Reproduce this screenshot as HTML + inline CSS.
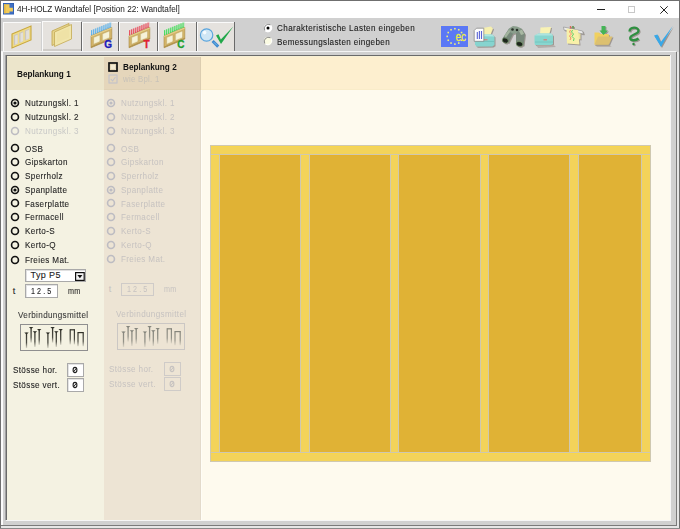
<!DOCTYPE html>
<html><head><meta charset="utf-8"><style>
html,body{margin:0;padding:0;width:680px;height:529px;overflow:hidden;background:#d0d0d0}
body>div,body>svg{position:absolute}
</style></head><body>
<div style="left:0;top:0;width:680px;height:529px;background:#d0d0d0"></div>
<div style="left:0px;top:0px;width:680px;height:18px;background:#ffffff;"></div>
<div style="left:0px;top:0px;width:680px;height:1px;background:#6f6f6f;"></div>
<div style="left:0px;top:0px;width:1px;height:529px;background:#6f6f6f;"></div>
<div style="left:679px;top:0px;width:1px;height:529px;background:#6f6f6f;"></div>
<svg style="left:3px;top:3px" width="11" height="12" viewBox="0 0 11 12"><rect x="0" y="0" width="11" height="11.5" fill="#2e5fb4"/><rect x="0.8" y="0.8" width="9.4" height="9.9" fill="#4070c4"/><path d="M0.9 1.2 H6.5 V4.8 H9.9 V8.6 H6.5 V10.3 H0.9 Z" fill="#f2cc58"/><path d="M0.9 1.2 H2.6 V10.3 H0.9 Z" fill="#e2b848"/></svg>
<div style="left:17px;top:3.96px;font-family:'Liberation Sans', sans-serif;font-size:9.5px;line-height:9.5px;color:#1a1a1a;white-space:nowrap;transform:scaleX(0.865);transform-origin:0 0;">4H-HOLZ Wandtafel [Position 22: Wandtafel]</div>
<div style="left:597px;top:9px;width:8px;height:1px;background:#222;"></div>
<div style="left:628px;top:6px;width:7px;height:7px;border:1px solid #c8c8c8;box-sizing:border-box;"></div>
<svg style="left:659.5px;top:5.5px" width="8" height="8"><path d="M0.3 0.3 L7.7 7.7 M7.7 0.3 L0.3 7.7" stroke="#222" stroke-width="1"/></svg>
<div style="left:3px;top:22px;width:38px;height:29px;background:#e5e2de;border-top:1px solid #fafafa;border-left:1px solid #fafafa;box-sizing:border-box"></div>
<div style="left:42px;top:21px;width:39px;height:30px;background:#e5e2de;border-top:1px solid #fafafa;border-left:1px solid #fafafa;box-sizing:border-box"></div>
<div style="left:81px;top:22px;width:1px;height:29px;background:#6a6a6a;"></div>
<div style="left:82px;top:22px;width:36px;height:29px;background:#e5e2de;border-top:1px solid #fafafa;border-left:1px solid #fafafa;box-sizing:border-box"></div>
<div style="left:118px;top:22px;width:1px;height:29px;background:#6a6a6a;"></div>
<div style="left:119px;top:22px;width:38px;height:29px;background:#e5e2de;border-top:1px solid #fafafa;border-left:1px solid #fafafa;box-sizing:border-box"></div>
<div style="left:157px;top:22px;width:1px;height:29px;background:#6a6a6a;"></div>
<div style="left:158px;top:22px;width:38px;height:29px;background:#e5e2de;border-top:1px solid #fafafa;border-left:1px solid #fafafa;box-sizing:border-box"></div>
<div style="left:196px;top:22px;width:1px;height:29px;background:#6a6a6a;"></div>
<div style="left:197px;top:22px;width:37px;height:29px;background:#e5e2de;border-top:1px solid #fafafa;border-left:1px solid #fafafa;box-sizing:border-box"></div>
<div style="left:234px;top:22px;width:1px;height:29px;background:#6a6a6a;"></div>
<div style="left:43px;top:49px;width:38px;height:2px;background:#cfccc8;"></div>
<div style="left:1px;top:51px;width:675px;height:1px;background:#f4f4f4;"></div>
<svg style="left:10px;top:24px" width="24" height="26" viewBox="0 0 24 26">
<path d="M2.00 10.00 L21.00 2.00 L21.00 16.00 L2.00 24.00 Z" fill="#f0dc88" stroke="#c9a83e" stroke-width="1.1"/>
<path d="M3.80 11.24 L7.60 9.64 L7.60 19.64 L3.80 21.24 Z" fill="#cbc6bf"/>
<path d="M5.10 11.74 L7.60 10.69 L7.60 19.39 L5.10 20.44 Z" fill="#e2dfda"/>
<path d="M9.20 8.97 L13.20 7.28 L13.20 17.28 L9.20 18.97 Z" fill="#cbc6bf"/>
<path d="M10.50 9.47 L13.20 8.33 L13.20 17.03 L10.50 18.17 Z" fill="#e2dfda"/>
<path d="M14.80 6.61 L19.20 4.76 L19.20 14.76 L14.80 16.61 Z" fill="#cbc6bf"/>
<path d="M16.10 7.11 L19.20 5.81 L19.20 14.51 L16.10 15.81 Z" fill="#e2dfda"/>
</svg>
<svg style="left:49px;top:22px" width="26" height="26" viewBox="0 0 26 26">
<path d="M3 9 L20 1.5 L20 16 L3 23.5 Z" fill="#e6d48a" stroke="#c4aa58" stroke-width="0.9"/>
<path d="M5.5 10 L22.5 2.5 L22.5 17 L5.5 24.5 Z" fill="#f1e6ac" stroke="#c8b060" stroke-width="0.9"/>
<path d="M8 11 L20 6 L20 15.5 L8 20.5 Z" fill="#efe2a6"/>
</svg>
<svg style="left:88px;top:20px" width="28" height="31" viewBox="0 0 28 31">
<path d="M3 10.2 L23.8 1.7 L23.8 7.6 L3 16.1 Z" fill="#5ab0ea" opacity="0.18"/>
<path d="M3.60 10.15 V15.35" stroke="#5ab0ea" stroke-width="1"/><path d="M5.65 9.32 V14.52" stroke="#5ab0ea" stroke-width="1"/><path d="M7.70 8.48 V13.68" stroke="#5ab0ea" stroke-width="1"/><path d="M9.75 7.64 V12.84" stroke="#5ab0ea" stroke-width="1"/><path d="M11.80 6.80 V12.00" stroke="#5ab0ea" stroke-width="1"/><path d="M13.85 5.97 V11.17" stroke="#5ab0ea" stroke-width="1"/><path d="M15.90 5.13 V10.33" stroke="#5ab0ea" stroke-width="1"/><path d="M17.95 4.29 V9.49" stroke="#5ab0ea" stroke-width="1"/><path d="M20.00 3.45 V8.65" stroke="#5ab0ea" stroke-width="1"/><path d="M22.05 2.62 V7.82" stroke="#5ab0ea" stroke-width="1"/><circle cx="3.60" cy="14.75" r="0.7" fill="#5ab0ea"/><circle cx="5.65" cy="13.92" r="0.7" fill="#5ab0ea"/><circle cx="7.70" cy="13.08" r="0.7" fill="#5ab0ea"/><circle cx="9.75" cy="12.24" r="0.7" fill="#5ab0ea"/><circle cx="11.80" cy="11.40" r="0.7" fill="#5ab0ea"/><circle cx="13.85" cy="10.57" r="0.7" fill="#5ab0ea"/><circle cx="15.90" cy="9.73" r="0.7" fill="#5ab0ea"/><circle cx="17.95" cy="8.89" r="0.7" fill="#5ab0ea"/><circle cx="20.00" cy="8.05" r="0.7" fill="#5ab0ea"/><circle cx="22.05" cy="7.22" r="0.7" fill="#5ab0ea"/>
<path d="M3 15.9 L23.8 7.4 L23.8 19 L3 27.8 Z" fill="#d4b66a" stroke="#a88a44" stroke-width="0.6"/>
<path d="M3 15.9 L23.8 7.4 L23.8 8.6 L3 17.1 Z" fill="#e8d490"/>
<path d="M3 26.4 L23.8 17.8 L23.8 19 L3 27.8 Z" fill="#b0924c"/>
<path d="M5.4 17.32 L11.9 14.66 L11.9 21.86 L5.4 24.52 Z" fill="#ece6c0" stroke="#b89a58" stroke-width="0.5"/><path d="M6.4 17.91 L11.4 15.87 L11.4 21.07 L6.4 23.11 Z" fill="#f6f2d8"/><path d="M14.2 13.72 L21.6 10.70 L21.6 17.90 L14.2 20.92 Z" fill="#ece6c0" stroke="#b89a58" stroke-width="0.5"/><path d="M15.2 14.31 L21.1 11.90 L21.1 17.10 L15.2 19.51 Z" fill="#f6f2d8"/>
<text x="16.2" y="28" font-family="Liberation Sans" font-weight="bold" font-size="10" fill="#1a1ab8" stroke="#1a1ab8" stroke-width="0.3">G</text>
</svg>
<svg style="left:126px;top:20px" width="28" height="31" viewBox="0 0 28 31">
<path d="M3 10.2 L23.8 1.7 L23.8 7.6 L3 16.1 Z" fill="#e84858" opacity="0.18"/>
<path d="M3.60 10.15 V15.35" stroke="#e84858" stroke-width="1"/><path d="M5.65 9.32 V14.52" stroke="#e84858" stroke-width="1"/><path d="M7.70 8.48 V13.68" stroke="#e84858" stroke-width="1"/><path d="M9.75 7.64 V12.84" stroke="#e84858" stroke-width="1"/><path d="M11.80 6.80 V12.00" stroke="#e84858" stroke-width="1"/><path d="M13.85 5.97 V11.17" stroke="#e84858" stroke-width="1"/><path d="M15.90 5.13 V10.33" stroke="#e84858" stroke-width="1"/><path d="M17.95 4.29 V9.49" stroke="#e84858" stroke-width="1"/><path d="M20.00 3.45 V8.65" stroke="#e84858" stroke-width="1"/><path d="M22.05 2.62 V7.82" stroke="#e84858" stroke-width="1"/><circle cx="3.60" cy="14.75" r="0.7" fill="#e84858"/><circle cx="5.65" cy="13.92" r="0.7" fill="#e84858"/><circle cx="7.70" cy="13.08" r="0.7" fill="#e84858"/><circle cx="9.75" cy="12.24" r="0.7" fill="#e84858"/><circle cx="11.80" cy="11.40" r="0.7" fill="#e84858"/><circle cx="13.85" cy="10.57" r="0.7" fill="#e84858"/><circle cx="15.90" cy="9.73" r="0.7" fill="#e84858"/><circle cx="17.95" cy="8.89" r="0.7" fill="#e84858"/><circle cx="20.00" cy="8.05" r="0.7" fill="#e84858"/><circle cx="22.05" cy="7.22" r="0.7" fill="#e84858"/>
<path d="M3 15.9 L23.8 7.4 L23.8 19 L3 27.8 Z" fill="#d4b66a" stroke="#a88a44" stroke-width="0.6"/>
<path d="M3 15.9 L23.8 7.4 L23.8 8.6 L3 17.1 Z" fill="#e8d490"/>
<path d="M3 26.4 L23.8 17.8 L23.8 19 L3 27.8 Z" fill="#b0924c"/>
<path d="M5.4 17.32 L11.9 14.66 L11.9 21.86 L5.4 24.52 Z" fill="#ece6c0" stroke="#b89a58" stroke-width="0.5"/><path d="M6.4 17.91 L11.4 15.87 L11.4 21.07 L6.4 23.11 Z" fill="#f6f2d8"/><path d="M14.2 13.72 L21.6 10.70 L21.6 17.90 L14.2 20.92 Z" fill="#ece6c0" stroke="#b89a58" stroke-width="0.5"/><path d="M15.2 14.31 L21.1 11.90 L21.1 17.10 L15.2 19.51 Z" fill="#f6f2d8"/>
<text x="17.4" y="28" font-family="Liberation Sans" font-weight="bold" font-size="10" fill="#e02030" stroke="#e02030" stroke-width="0.3">T</text>
</svg>
<svg style="left:161px;top:20px" width="28" height="31" viewBox="0 0 28 31">
<path d="M3 10.2 L23.8 1.7 L23.8 7.6 L3 16.1 Z" fill="#40dc58" opacity="0.18"/>
<path d="M3.60 10.15 V15.35" stroke="#40dc58" stroke-width="1"/><path d="M5.65 9.32 V14.52" stroke="#40dc58" stroke-width="1"/><path d="M7.70 8.48 V13.68" stroke="#40dc58" stroke-width="1"/><path d="M9.75 7.64 V12.84" stroke="#40dc58" stroke-width="1"/><path d="M11.80 6.80 V12.00" stroke="#40dc58" stroke-width="1"/><path d="M13.85 5.97 V11.17" stroke="#40dc58" stroke-width="1"/><path d="M15.90 5.13 V10.33" stroke="#40dc58" stroke-width="1"/><path d="M17.95 4.29 V9.49" stroke="#40dc58" stroke-width="1"/><path d="M20.00 3.45 V8.65" stroke="#40dc58" stroke-width="1"/><path d="M22.05 2.62 V7.82" stroke="#40dc58" stroke-width="1"/><circle cx="3.60" cy="14.75" r="0.7" fill="#40dc58"/><circle cx="5.65" cy="13.92" r="0.7" fill="#40dc58"/><circle cx="7.70" cy="13.08" r="0.7" fill="#40dc58"/><circle cx="9.75" cy="12.24" r="0.7" fill="#40dc58"/><circle cx="11.80" cy="11.40" r="0.7" fill="#40dc58"/><circle cx="13.85" cy="10.57" r="0.7" fill="#40dc58"/><circle cx="15.90" cy="9.73" r="0.7" fill="#40dc58"/><circle cx="17.95" cy="8.89" r="0.7" fill="#40dc58"/><circle cx="20.00" cy="8.05" r="0.7" fill="#40dc58"/><circle cx="22.05" cy="7.22" r="0.7" fill="#40dc58"/>
<path d="M3 15.9 L23.8 7.4 L23.8 19 L3 27.8 Z" fill="#d4b66a" stroke="#a88a44" stroke-width="0.6"/>
<path d="M3 15.9 L23.8 7.4 L23.8 8.6 L3 17.1 Z" fill="#e8d490"/>
<path d="M3 26.4 L23.8 17.8 L23.8 19 L3 27.8 Z" fill="#b0924c"/>
<path d="M5.4 17.32 L11.9 14.66 L11.9 21.86 L5.4 24.52 Z" fill="#ece6c0" stroke="#b89a58" stroke-width="0.5"/><path d="M6.4 17.91 L11.4 15.87 L11.4 21.07 L6.4 23.11 Z" fill="#f6f2d8"/><path d="M14.2 13.72 L21.6 10.70 L21.6 17.90 L14.2 20.92 Z" fill="#ece6c0" stroke="#b89a58" stroke-width="0.5"/><path d="M15.2 14.31 L21.1 11.90 L21.1 17.10 L15.2 19.51 Z" fill="#f6f2d8"/>
<text x="16.3" y="28" font-family="Liberation Sans" font-weight="bold" font-size="10" fill="#20a030" stroke="#20a030" stroke-width="0.3">C</text>
</svg>
<svg style="left:199px;top:24px" width="36" height="26" viewBox="0 0 36 26">
<path d="M13.6 17 L19.2 22.6" stroke="#3d8ad0" stroke-width="3"/>
<path d="M14.8 18.2 L18 21.4" stroke="#8cc4ee" stroke-width="0.8"/>
<circle cx="7.6" cy="11" r="6.2" fill="#cfe6f5" stroke="#5aa4dc" stroke-width="1.2"/>
<circle cx="5.6" cy="8.6" r="1.8" fill="#f6fcff"/>
<path d="M17 11.5 L19.5 10.3 L21.8 15.5 L34.3 2.5 L22 20 Z" fill="#22a84a"/>
</svg>
<svg style="left:262.5px;top:22.6px" width="10" height="10"><circle cx="5" cy="5" r="4.2" fill="#ffffff"/><path d="M1.8 7.5 A4.2 4.2 0 0 1 7.5 1.8" fill="none" stroke="#8a8a8a" stroke-width="1"/><path d="M8.2 2.5 A4.2 4.2 0 0 1 2.5 8.2" fill="none" stroke="#ffffff" stroke-width="1"/><circle cx="5" cy="5" r="1.5" fill="#000"/></svg>
<svg style="left:262.5px;top:36.3px" width="10" height="10"><circle cx="5" cy="5" r="4.2" fill="#fbfbe2"/><path d="M1.8 7.5 A4.2 4.2 0 0 1 7.5 1.8" fill="none" stroke="#8a8a8a" stroke-width="1"/><path d="M8.2 2.5 A4.2 4.2 0 0 1 2.5 8.2" fill="none" stroke="#ffffff" stroke-width="1"/></svg>
<div style="left:277px;top:23.68px;font-family:'Liberation Sans', sans-serif;font-size:9px;line-height:9px;color:#1a1a1a;white-space:nowrap;transform:scaleX(0.9);transform-origin:0 0;letter-spacing:0.45px;-webkit-text-stroke:0.1px #1a1a1a;">Charakteristische Lasten eingeben</div>
<div style="left:277px;top:38.18px;font-family:'Liberation Sans', sans-serif;font-size:9px;line-height:9px;color:#1a1a1a;white-space:nowrap;transform:scaleX(0.9);transform-origin:0 0;letter-spacing:0.4px;-webkit-text-stroke:0.1px #1a1a1a;">Bemessungslasten eingeben</div>
<svg style="left:440px;top:25px" width="29" height="23" viewBox="0 0 29 23">
<rect x="0.5" y="0.5" width="28" height="22" fill="#5b78f5" stroke="#d6d2c6" stroke-width="1"/>
<rect x="14.10" y="2.90" width="1.6" height="1.6" fill="#f0f07a"/><rect x="17.95" y="3.93" width="1.6" height="1.6" fill="#f0f07a"/><rect x="20.77" y="6.75" width="1.6" height="1.6" fill="#f0f07a"/><rect x="20.77" y="14.45" width="1.6" height="1.6" fill="#f0f07a"/><rect x="17.95" y="17.27" width="1.6" height="1.6" fill="#f0f07a"/><rect x="14.10" y="18.30" width="1.6" height="1.6" fill="#f0f07a"/><rect x="10.25" y="17.27" width="1.6" height="1.6" fill="#f0f07a"/><rect x="7.43" y="14.45" width="1.6" height="1.6" fill="#f0f07a"/><rect x="6.40" y="10.60" width="1.6" height="1.6" fill="#f0f07a"/><rect x="7.43" y="6.75" width="1.6" height="1.6" fill="#f0f07a"/><rect x="10.25" y="3.93" width="1.6" height="1.6" fill="#f0f07a"/>
<text x="15.6" y="16.3" font-family="Liberation Sans" font-size="12.5" fill="#eeee40" stroke="#eeee40" stroke-width="0.3" textLength="10.5" lengthAdjust="spacingAndGlyphs">ec</text>
</svg>
<svg style="left:470px;top:24px;filter:drop-shadow(1px 1px 0.6px rgba(60,40,30,0.35))" width="28" height="26" viewBox="0 0 28 26">
<path d="M6 21 L23 20.5 L25 22 L7 23 Z" fill="#b8b0a8" opacity="0.6"/>
<path d="M12.5 4 L21 2.6 L23 4.5 L20.5 11 L13 11 Z" fill="#f6f0b0"/>
<path d="M5 12 L8 10.5 L22 10.5 L24.5 12.5 L24.5 20.5 L22.5 22.5 L6.5 22.5 L5 20.5 Z" fill="#86d4cf"/>
<path d="M5 12 L8 10.5 L22 10.5 L24.5 12.5 Z" fill="#b0e6e2"/>
<path d="M5.5 17.5 L24 17.5" stroke="#70c0bb" stroke-width="0.8"/>
<rect x="14" y="15" width="3.5" height="1.4" fill="#c89088"/>
<path d="M6.5 4.2 L13.8 4.2 L13.8 17.3 L4.2 17.3 L4.2 6.5 Z" fill="#fdfdfd" stroke="#808080" stroke-width="0.7"/>
<path d="M7.3 8 V15 M9.4 7 V15 M11.5 7 V15" stroke="#5a64d4" stroke-width="1.1"/>
</svg>
<svg style="left:500px;top:24px;filter:drop-shadow(1px 1px 0.6px rgba(60,40,30,0.35))" width="28" height="26" viewBox="0 0 28 26">
<path d="M2.5 14.5 L9 4.5 L14.5 7 L8.5 19 Z" fill="#76887a"/>
<path d="M4 12 L9.5 5 L11.5 6 L6 13.5 Z" fill="#a2b49e"/>
<path d="M16 8 L21.5 4.5 L25 10 L23.5 21.5 L16 20.5 Z" fill="#7a8a7c"/>
<path d="M19 7 L22 5.5 L24 10 L21 11 Z" fill="#a8b8a2"/>
<path d="M9 4.5 L13 2 L17 2.5 L21.5 4.5 L16.5 9 L13.5 10 L10 8 Z" fill="#8a9e8c"/>
<circle cx="12.5" cy="5.5" r="1.3" fill="#2a322a"/><circle cx="17" cy="6" r="1.3" fill="#2a322a"/>
<ellipse cx="5.3" cy="16.5" rx="3.2" ry="2.4" transform="rotate(25 5.3 16.5)" fill="#1c241c" stroke="#7ea070" stroke-width="0.6"/>
<ellipse cx="19.5" cy="20" rx="3.3" ry="2.4" transform="rotate(15 19.5 20)" fill="#1c241c" stroke="#7ea070" stroke-width="0.6"/>
</svg>
<svg style="left:530px;top:24px;filter:drop-shadow(1px 1px 0.6px rgba(60,40,30,0.35))" width="28" height="26" viewBox="0 0 28 26">
<path d="M6 21 L23 20.5 L25 22 L7 23 Z" fill="#b8b0a8" opacity="0.6"/>
<path d="M10.5 3.5 L21 3 L20.5 6 L19 11 L10 11 Z" fill="#f8f2b4"/>
<path d="M4.5 11.5 L8.5 9.5 L21 9.5 L23 11.5 L23 20 L21 21 L5 21 L4.5 19 Z" fill="#88d6cf"/>
<path d="M4.5 11.5 L8.5 9.5 L21 9.5 L23 11.5 Z" fill="#ade4df"/>
<path d="M5 18 L23 18" stroke="#72c2bb" stroke-width="0.8"/>
<rect x="13.5" y="15" width="3.5" height="1.5" fill="#c89088"/>
</svg>
<svg style="left:560px;top:23px;filter:drop-shadow(1px 1px 0.6px rgba(60,40,30,0.35))" width="28" height="26" viewBox="0 0 28 26">
<path d="M3.5 4 L22.5 8 L23.5 11 L4 7 Z" fill="#ececec" stroke="#8a8a8a" stroke-width="0.6"/>
<path d="M18 10 L20.5 10.5 L20.5 16.5 L18 16 Z" fill="#ece49a"/>
<path d="M6.5 5.5 L18 7 L19.5 21.5 L7 20.5 Z" fill="#f8f0a8"/>
<path d="M10.5 3 V5.5 M13 3 V5.5" stroke="#d86a5a" stroke-width="1.4"/>
<path d="M13 3 V5.5" stroke="#4aa860" stroke-width="1.4"/>
<path d="M10.5 7 L9.5 9 L11.5 11 L9.5 13 L11 15 L10 17" fill="none" stroke="#f08060" stroke-width="0.9"/>
<path d="M12.5 7 L11.5 9 L13.5 11 L12 13.5 L14 15.5 L13.5 18" fill="none" stroke="#50c860" stroke-width="0.9"/>
</svg>
<svg style="left:590px;top:23px;filter:drop-shadow(1px 1px 0.6px rgba(60,40,30,0.35))" width="28" height="26" viewBox="0 0 28 26">
<path d="M4.5 9.5 L9 9.5 L10.5 11 L18.5 11 L19 13 L18.5 21.5 L4.5 21.5 Z" fill="#f0d060"/>
<path d="M8 13.5 L22.5 13.5 L19 21.5 L4.5 21.5 Z" fill="#dcc070"/>
<path d="M5 22 L19 22 L21 23 L6 23 Z" fill="#a09888" opacity="0.5"/>
<path d="M11.5 3 L15.5 3 L15.5 7.5 L18 7.5 L13.5 12 L9.5 7.5 L11.5 7.5 Z" fill="#44b456"/>
</svg>
<svg style="left:622px;top:23px;filter:drop-shadow(1px 1px 0.6px rgba(60,40,30,0.35))" width="22" height="26" viewBox="0 0 22 26">
<path d="M7.5 8.5 C7.5 3.5 16.5 3.2 16.5 8 C16.5 11 8.2 11.5 8.2 15 C8.2 17.8 13.5 18 16.5 15.5" fill="none" stroke="#2e9040" stroke-width="2.3"/>
<circle cx="11.5" cy="21" r="1.2" fill="#2a8a3a"/>
</svg>
<svg style="left:650px;top:23px;filter:drop-shadow(1px 1px 0.6px rgba(60,40,30,0.35))" width="26" height="26" viewBox="0 0 26 26">
<path d="M4 12.5 L7.5 11.5 L10.8 19 L22.8 3 L11 24 Z" fill="#38a8e8"/>
</svg>
<div style="left:1px;top:52px;width:2px;height:477px;background:#fbfbfb;"></div>
<div style="left:3px;top:52px;width:676px;height:477px;background:#d0d0d0;"></div>
<div style="left:1px;top:52px;width:2px;height:477px;background:#fbfbfb;"></div>
<div style="left:5px;top:55px;width:1px;height:465px;background:#a0a0a0;"></div>
<div style="left:6px;top:55px;width:1px;height:465px;background:#6a6a6a;"></div>
<div style="left:6px;top:55px;width:665px;height:1px;background:#6a6a6a;"></div>
<div style="left:6px;top:520px;width:665px;height:1px;background:#f6f6f6;"></div>
<div style="left:670px;top:55px;width:1px;height:466px;background:#f6f6f6;"></div>
<div style="left:676px;top:52px;width:1px;height:474px;background:#7a7a7a;"></div>
<div style="left:1px;top:525px;width:676px;height:1px;background:#7a7a7a;"></div>
<div style="left:677px;top:52px;width:2px;height:476px;background:#e6e6e6;"></div>
<div style="left:1px;top:526px;width:678px;height:2px;background:#e6e6e6;"></div>
<div style="left:0px;top:528px;width:680px;height:1px;background:#8a8a8a;"></div>
<div style="left:7px;top:56px;width:663px;height:464px;background:#fefaee;"></div>
<div style="left:7px;top:56px;width:97px;height:34px;background:#ece5cb;"></div>
<div style="left:104px;top:56px;width:97px;height:34px;background:#e5d6bb;"></div>
<div style="left:201px;top:56px;width:469px;height:34px;background:#fdefcf;"></div>
<div style="left:7px;top:90px;width:97px;height:430px;background:#f4f2e2;"></div>
<div style="left:104px;top:90px;width:97px;height:430px;background:#ede4d4;"></div>
<div style="left:200px;top:56px;width:1px;height:34px;background:#dccdb0;"></div>
<div style="left:200px;top:90px;width:1px;height:430px;background:#e3dacb;"></div>
<div style="left:201px;top:90px;width:1px;height:430px;background:#fffdf6;"></div>
<div style="left:104px;top:89px;width:96px;height:1px;background:#e0d2b5;"></div>
<div style="left:201px;top:89px;width:469px;height:1px;background:#f9ecc9;"></div>
<div style="left:7px;top:56px;width:663px;height:1px;background:#f8f0d4;"></div>
<div style="left:17px;top:69.78px;font-family:'Liberation Sans', sans-serif;font-size:9px;line-height:9px;color:#111;white-space:nowrap;font-weight:bold;transform:scaleX(0.91);transform-origin:0 0;">Beplankung 1</div>
<svg style="left:108px;top:62px" width="10" height="10"><rect x="1" y="1" width="8" height="8" fill="#f4ead2" stroke="#111" stroke-width="1.7"/><rect x="2.6" y="2.6" width="4.8" height="4.8" fill="none" stroke="#d9cba8" stroke-width="0.6"/></svg>
<div style="left:123px;top:62.98px;font-family:'Liberation Sans', sans-serif;font-size:9px;line-height:9px;color:#111;white-space:nowrap;font-weight:bold;transform:scaleX(0.91);transform-origin:0 0;">Beplankung 2</div>
<svg style="left:108px;top:74.3px" width="10" height="10"><rect x="1" y="1" width="8" height="8" fill="none" stroke="#c2c2ca" stroke-width="1.1"/><path d="M2.8 5 L4.6 7 L7.5 3" fill="none" stroke="#c2c2ca" stroke-width="1.1"/></svg>
<div style="left:123px;top:74.98px;font-family:'Liberation Sans', sans-serif;font-size:9px;line-height:9px;color:#c8c2b8;white-space:nowrap;transform:scaleX(0.87);transform-origin:0 0;letter-spacing:0.3px;">wie Bpl. 1</div>
<svg style="left:9.5px;top:98.1px" width="10" height="10"><circle cx="5" cy="5" r="3.45" fill="none" stroke="#111" stroke-width="1.6"/><circle cx="5" cy="5" r="1.6" fill="#111"/></svg>
<div style="left:24.6px;top:99.48px;font-family:'Liberation Sans', sans-serif;font-size:9px;line-height:9px;color:#262626;white-space:nowrap;transform:scaleX(0.9);transform-origin:0 0;letter-spacing:0.4px;-webkit-text-stroke:0.12px #262626;">Nutzungskl. 1</div>
<svg style="left:9.5px;top:111.89999999999999px" width="10" height="10"><circle cx="5" cy="5" r="3.45" fill="none" stroke="#111" stroke-width="1.6"/></svg>
<div style="left:24.6px;top:113.28px;font-family:'Liberation Sans', sans-serif;font-size:9px;line-height:9px;color:#262626;white-space:nowrap;transform:scaleX(0.9);transform-origin:0 0;letter-spacing:0.4px;-webkit-text-stroke:0.12px #262626;">Nutzungskl. 2</div>
<svg style="left:9.5px;top:125.5px" width="10" height="10"><circle cx="5" cy="5" r="3.45" fill="none" stroke="#bdbcc2" stroke-width="1.6"/></svg>
<div style="left:24.6px;top:126.88px;font-family:'Liberation Sans', sans-serif;font-size:9px;line-height:9px;color:#c8c8c6;white-space:nowrap;transform:scaleX(0.9);transform-origin:0 0;letter-spacing:0.4px;">Nutzungskl. 3</div>
<svg style="left:9.5px;top:143.2px" width="10" height="10"><circle cx="5" cy="5" r="3.45" fill="none" stroke="#111" stroke-width="1.6"/></svg>
<div style="left:24.6px;top:144.58px;font-family:'Liberation Sans', sans-serif;font-size:9px;line-height:9px;color:#262626;white-space:nowrap;transform:scaleX(0.9);transform-origin:0 0;letter-spacing:0.4px;-webkit-text-stroke:0.12px #262626;">OSB</div>
<svg style="left:9.5px;top:157.1px" width="10" height="10"><circle cx="5" cy="5" r="3.45" fill="none" stroke="#111" stroke-width="1.6"/></svg>
<div style="left:24.6px;top:158.48px;font-family:'Liberation Sans', sans-serif;font-size:9px;line-height:9px;color:#262626;white-space:nowrap;transform:scaleX(0.9);transform-origin:0 0;letter-spacing:0.4px;-webkit-text-stroke:0.12px #262626;">Gipskarton</div>
<svg style="left:9.5px;top:170.79999999999998px" width="10" height="10"><circle cx="5" cy="5" r="3.45" fill="none" stroke="#111" stroke-width="1.6"/></svg>
<div style="left:24.6px;top:172.18px;font-family:'Liberation Sans', sans-serif;font-size:9px;line-height:9px;color:#262626;white-space:nowrap;transform:scaleX(0.9);transform-origin:0 0;letter-spacing:0.4px;-webkit-text-stroke:0.12px #262626;">Sperrholz</div>
<svg style="left:9.5px;top:184.6px" width="10" height="10"><circle cx="5" cy="5" r="3.45" fill="none" stroke="#111" stroke-width="1.6"/><circle cx="5" cy="5" r="1.6" fill="#111"/></svg>
<div style="left:24.6px;top:185.98px;font-family:'Liberation Sans', sans-serif;font-size:9px;line-height:9px;color:#262626;white-space:nowrap;transform:scaleX(0.9);transform-origin:0 0;letter-spacing:0.4px;-webkit-text-stroke:0.12px #262626;">Spanplatte</div>
<svg style="left:9.5px;top:198.4px" width="10" height="10"><circle cx="5" cy="5" r="3.45" fill="none" stroke="#111" stroke-width="1.6"/></svg>
<div style="left:24.6px;top:199.78px;font-family:'Liberation Sans', sans-serif;font-size:9px;line-height:9px;color:#262626;white-space:nowrap;transform:scaleX(0.9);transform-origin:0 0;letter-spacing:0.4px;-webkit-text-stroke:0.12px #262626;">Faserplatte</div>
<svg style="left:9.5px;top:212.1px" width="10" height="10"><circle cx="5" cy="5" r="3.45" fill="none" stroke="#111" stroke-width="1.6"/></svg>
<div style="left:24.6px;top:213.48px;font-family:'Liberation Sans', sans-serif;font-size:9px;line-height:9px;color:#262626;white-space:nowrap;transform:scaleX(0.9);transform-origin:0 0;letter-spacing:0.4px;-webkit-text-stroke:0.12px #262626;">Fermacell</div>
<svg style="left:9.5px;top:226.0px" width="10" height="10"><circle cx="5" cy="5" r="3.45" fill="none" stroke="#111" stroke-width="1.6"/></svg>
<div style="left:24.6px;top:227.38px;font-family:'Liberation Sans', sans-serif;font-size:9px;line-height:9px;color:#262626;white-space:nowrap;transform:scaleX(0.9);transform-origin:0 0;letter-spacing:0.4px;-webkit-text-stroke:0.12px #262626;">Kerto-S</div>
<svg style="left:9.5px;top:239.7px" width="10" height="10"><circle cx="5" cy="5" r="3.45" fill="none" stroke="#111" stroke-width="1.6"/></svg>
<div style="left:24.6px;top:241.08px;font-family:'Liberation Sans', sans-serif;font-size:9px;line-height:9px;color:#262626;white-space:nowrap;transform:scaleX(0.9);transform-origin:0 0;letter-spacing:0.4px;-webkit-text-stroke:0.12px #262626;">Kerto-Q</div>
<svg style="left:9.5px;top:254.70000000000005px" width="10" height="10"><circle cx="5" cy="5" r="3.45" fill="none" stroke="#111" stroke-width="1.6"/></svg>
<div style="left:24.6px;top:256.08px;font-family:'Liberation Sans', sans-serif;font-size:9px;line-height:9px;color:#262626;white-space:nowrap;transform:scaleX(0.9);transform-origin:0 0;letter-spacing:0.4px;-webkit-text-stroke:0.12px #262626;">Freies Mat.</div>
<svg style="left:105.5px;top:98.1px" width="10" height="10"><circle cx="5" cy="5" r="3.45" fill="none" stroke="#bdbcc2" stroke-width="1.6"/><circle cx="5" cy="5" r="1.6" fill="#bdbcc2"/></svg>
<div style="left:120.6px;top:99.48px;font-family:'Liberation Sans', sans-serif;font-size:9px;line-height:9px;color:#c6c2c0;white-space:nowrap;transform:scaleX(0.9);transform-origin:0 0;letter-spacing:0.4px;">Nutzungskl. 1</div>
<svg style="left:105.5px;top:111.89999999999999px" width="10" height="10"><circle cx="5" cy="5" r="3.45" fill="none" stroke="#bdbcc2" stroke-width="1.6"/></svg>
<div style="left:120.6px;top:113.28px;font-family:'Liberation Sans', sans-serif;font-size:9px;line-height:9px;color:#c6c2c0;white-space:nowrap;transform:scaleX(0.9);transform-origin:0 0;letter-spacing:0.4px;">Nutzungskl. 2</div>
<svg style="left:105.5px;top:125.5px" width="10" height="10"><circle cx="5" cy="5" r="3.45" fill="none" stroke="#bdbcc2" stroke-width="1.6"/></svg>
<div style="left:120.6px;top:126.88px;font-family:'Liberation Sans', sans-serif;font-size:9px;line-height:9px;color:#c6c2c0;white-space:nowrap;transform:scaleX(0.9);transform-origin:0 0;letter-spacing:0.4px;">Nutzungskl. 3</div>
<svg style="left:105.5px;top:143.2px" width="10" height="10"><circle cx="5" cy="5" r="3.45" fill="none" stroke="#bdbcc2" stroke-width="1.6"/></svg>
<div style="left:120.6px;top:144.58px;font-family:'Liberation Sans', sans-serif;font-size:9px;line-height:9px;color:#c6c2c0;white-space:nowrap;transform:scaleX(0.9);transform-origin:0 0;letter-spacing:0.4px;">OSB</div>
<svg style="left:105.5px;top:157.1px" width="10" height="10"><circle cx="5" cy="5" r="3.45" fill="none" stroke="#bdbcc2" stroke-width="1.6"/></svg>
<div style="left:120.6px;top:158.48px;font-family:'Liberation Sans', sans-serif;font-size:9px;line-height:9px;color:#c6c2c0;white-space:nowrap;transform:scaleX(0.9);transform-origin:0 0;letter-spacing:0.4px;">Gipskarton</div>
<svg style="left:105.5px;top:170.79999999999998px" width="10" height="10"><circle cx="5" cy="5" r="3.45" fill="none" stroke="#bdbcc2" stroke-width="1.6"/></svg>
<div style="left:120.6px;top:172.18px;font-family:'Liberation Sans', sans-serif;font-size:9px;line-height:9px;color:#c6c2c0;white-space:nowrap;transform:scaleX(0.9);transform-origin:0 0;letter-spacing:0.4px;">Sperrholz</div>
<svg style="left:105.5px;top:184.6px" width="10" height="10"><circle cx="5" cy="5" r="3.45" fill="none" stroke="#bdbcc2" stroke-width="1.6"/><circle cx="5" cy="5" r="1.6" fill="#bdbcc2"/></svg>
<div style="left:120.6px;top:185.98px;font-family:'Liberation Sans', sans-serif;font-size:9px;line-height:9px;color:#c6c2c0;white-space:nowrap;transform:scaleX(0.9);transform-origin:0 0;letter-spacing:0.4px;">Spanplatte</div>
<svg style="left:105.5px;top:198.4px" width="10" height="10"><circle cx="5" cy="5" r="3.45" fill="none" stroke="#bdbcc2" stroke-width="1.6"/></svg>
<div style="left:120.6px;top:199.78px;font-family:'Liberation Sans', sans-serif;font-size:9px;line-height:9px;color:#c6c2c0;white-space:nowrap;transform:scaleX(0.9);transform-origin:0 0;letter-spacing:0.4px;">Faserplatte</div>
<svg style="left:105.5px;top:212.1px" width="10" height="10"><circle cx="5" cy="5" r="3.45" fill="none" stroke="#bdbcc2" stroke-width="1.6"/></svg>
<div style="left:120.6px;top:213.48px;font-family:'Liberation Sans', sans-serif;font-size:9px;line-height:9px;color:#c6c2c0;white-space:nowrap;transform:scaleX(0.9);transform-origin:0 0;letter-spacing:0.4px;">Fermacell</div>
<svg style="left:105.5px;top:226.0px" width="10" height="10"><circle cx="5" cy="5" r="3.45" fill="none" stroke="#bdbcc2" stroke-width="1.6"/></svg>
<div style="left:120.6px;top:227.38px;font-family:'Liberation Sans', sans-serif;font-size:9px;line-height:9px;color:#c6c2c0;white-space:nowrap;transform:scaleX(0.9);transform-origin:0 0;letter-spacing:0.4px;">Kerto-S</div>
<svg style="left:105.5px;top:239.7px" width="10" height="10"><circle cx="5" cy="5" r="3.45" fill="none" stroke="#bdbcc2" stroke-width="1.6"/></svg>
<div style="left:120.6px;top:241.08px;font-family:'Liberation Sans', sans-serif;font-size:9px;line-height:9px;color:#c6c2c0;white-space:nowrap;transform:scaleX(0.9);transform-origin:0 0;letter-spacing:0.4px;">Kerto-Q</div>
<svg style="left:105.5px;top:253.80000000000007px" width="10" height="10"><circle cx="5" cy="5" r="3.45" fill="none" stroke="#bdbcc2" stroke-width="1.6"/></svg>
<div style="left:120.6px;top:255.18px;font-family:'Liberation Sans', sans-serif;font-size:9px;line-height:9px;color:#c6c2c0;white-space:nowrap;transform:scaleX(0.9);transform-origin:0 0;letter-spacing:0.4px;">Freies Mat.</div>
<div style="left:25px;top:269px;width:61px;height:13px;background:#fff;border:1px solid #a9a9a9;box-sizing:border-box;box-shadow:inset 1px 1px 0 #e0e0e0"></div>
<div style="left:30.5px;top:270.98px;font-family:'Liberation Sans', sans-serif;font-size:9px;line-height:9px;color:#1a1a1a;white-space:nowrap;letter-spacing:0.4px;-webkit-text-stroke:0.1px #1a1a1a;">Typ P5</div>
<svg style="left:75px;top:271.5px" width="10" height="9"><rect x="0.6" y="0.6" width="8.6" height="7.8" fill="#f4f4f4" stroke="#111" stroke-width="1.2"/><path d="M2.4 3 L7.4 3 L4.9 6.2 Z" fill="#111"/></svg>
<div style="left:12.7px;top:286.88px;font-family:'Liberation Sans', sans-serif;font-size:9px;line-height:9px;color:#262626;white-space:nowrap;-webkit-text-stroke:0.1px #262626;">t</div>
<div style="left:25px;top:284px;width:33px;height:13.5px;background:#fff;border:1px solid #a9a9a9;box-sizing:border-box;box-shadow:inset 1px 1px 0 #e4e4e4;"></div>
<div style="left:30.6px;top:286.88px;font-family:'Liberation Sans', sans-serif;font-size:9px;line-height:9px;color:#262626;white-space:nowrap;transform:scaleX(0.8);transform-origin:0 0;letter-spacing:2.6px;-webkit-text-stroke:0.12px #262626;">12.5</div>
<div style="left:68px;top:286.68px;font-family:'Liberation Sans', sans-serif;font-size:9px;line-height:9px;color:#262626;white-space:nowrap;transform:scaleX(0.8);transform-origin:0 0;letter-spacing:0.4px;-webkit-text-stroke:0.1px #262626;">mm</div>
<div style="left:108.7px;top:285.38px;font-family:'Liberation Sans', sans-serif;font-size:9px;line-height:9px;color:#c6c2c0;white-space:nowrap;">t</div>
<div style="left:121px;top:282.5px;width:33px;height:13.5px;background:transparent;border:1px solid #cfcbc8;box-sizing:border-box;"></div>
<div style="left:126.6px;top:285.38px;font-family:'Liberation Sans', sans-serif;font-size:9px;line-height:9px;color:#c6c2c0;white-space:nowrap;transform:scaleX(0.8);transform-origin:0 0;letter-spacing:2.6px;">12.5</div>
<div style="left:164px;top:285.18px;font-family:'Liberation Sans', sans-serif;font-size:9px;line-height:9px;color:#c6c2c0;white-space:nowrap;transform:scaleX(0.8);transform-origin:0 0;letter-spacing:0.4px;">mm</div>
<div style="left:18.2px;top:311.38px;font-family:'Liberation Sans', sans-serif;font-size:9px;line-height:9px;color:#3a3a3a;white-space:nowrap;transform:scaleX(0.9);transform-origin:0 0;letter-spacing:0.4px;-webkit-text-stroke:0.1px #3a3a3a;">Verbindungsmittel</div>
<div style="left:20px;top:324px;width:68px;height:27px;border:1px solid #8f8f8f;box-sizing:border-box"></div>
<svg style="left:20px;top:324px" width="69" height="27"><defs><linearGradient id="ng0" x1="0" y1="0" x2="0" y2="1"><stop offset="0" stop-color="#303028"/><stop offset="0.65" stop-color="#303028" stop-opacity="0.85"/><stop offset="1" stop-color="#303028" stop-opacity="0.15"/></linearGradient></defs><path d="M4.30 8.40 L8.70 8.40 L7.10 9.90 L5.90 9.90 Z" fill="#303028"/><rect x="5.85" y="8.70" width="1.3" height="15.40" fill="url(#ng0)"/><path d="M8.90 3.10 L13.30 3.10 L11.70 4.60 L10.50 4.60 Z" fill="#303028"/><rect x="10.45" y="3.40" width="1.3" height="15.30" fill="url(#ng0)"/><path d="M12.70 7.30 L17.10 7.30 L15.50 8.80 L14.30 8.80 Z" fill="#303028"/><rect x="14.25" y="7.60" width="1.3" height="15.40" fill="url(#ng0)"/><path d="M17.00 5.10 L21.40 5.10 L19.80 6.60 L18.60 6.60 Z" fill="#303028"/><rect x="18.55" y="5.40" width="1.3" height="15.50" fill="url(#ng0)"/><path d="M25.70 8.40 L30.10 8.40 L28.50 9.90 L27.30 9.90 Z" fill="#303028"/><rect x="27.25" y="8.70" width="1.3" height="15.40" fill="url(#ng0)"/><path d="M30.40 3.10 L34.80 3.10 L33.20 4.60 L32.00 4.60 Z" fill="#303028"/><rect x="31.95" y="3.40" width="1.3" height="15.30" fill="url(#ng0)"/><path d="M34.10 7.30 L38.50 7.30 L36.90 8.80 L35.70 8.80 Z" fill="#303028"/><rect x="35.65" y="7.60" width="1.3" height="15.40" fill="url(#ng0)"/><path d="M38.50 5.10 L42.90 5.10 L41.30 6.60 L40.10 6.60 Z" fill="#303028"/><rect x="40.05" y="5.40" width="1.3" height="15.50" fill="url(#ng0)"/><path d="M50.20 5.80 H54.40" stroke="#303028" stroke-width="1.2"/><rect x="49.60" y="5.20" width="1.2" height="15.30" fill="url(#ng0)"/><rect x="53.80" y="5.20" width="1.2" height="15.30" fill="url(#ng0)"/><path d="M58.00 8.60 H63.20" stroke="#303028" stroke-width="1.2"/><rect x="57.40" y="8.00" width="1.2" height="14.30" fill="url(#ng0)"/><rect x="62.60" y="8.00" width="1.2" height="14.30" fill="url(#ng0)"/></svg>
<div style="left:115.5px;top:310.38px;font-family:'Liberation Sans', sans-serif;font-size:9px;line-height:9px;color:#c6c2c0;white-space:nowrap;transform:scaleX(0.9);transform-origin:0 0;letter-spacing:0.4px;">Verbindungsmittel</div>
<div style="left:117px;top:323px;width:68px;height:27px;border:1px solid #cbc7c4;box-sizing:border-box"></div>
<svg style="left:117px;top:323px" width="69" height="27"><defs><linearGradient id="ng1" x1="0" y1="0" x2="0" y2="1"><stop offset="0" stop-color="#85857c"/><stop offset="0.65" stop-color="#85857c" stop-opacity="0.85"/><stop offset="1" stop-color="#85857c" stop-opacity="0.15"/></linearGradient></defs><path d="M4.30 8.40 L8.70 8.40 L7.10 9.90 L5.90 9.90 Z" fill="#85857c"/><rect x="5.85" y="8.70" width="1.3" height="15.40" fill="url(#ng1)"/><path d="M8.90 3.10 L13.30 3.10 L11.70 4.60 L10.50 4.60 Z" fill="#85857c"/><rect x="10.45" y="3.40" width="1.3" height="15.30" fill="url(#ng1)"/><path d="M12.70 7.30 L17.10 7.30 L15.50 8.80 L14.30 8.80 Z" fill="#85857c"/><rect x="14.25" y="7.60" width="1.3" height="15.40" fill="url(#ng1)"/><path d="M17.00 5.10 L21.40 5.10 L19.80 6.60 L18.60 6.60 Z" fill="#85857c"/><rect x="18.55" y="5.40" width="1.3" height="15.50" fill="url(#ng1)"/><path d="M25.70 8.40 L30.10 8.40 L28.50 9.90 L27.30 9.90 Z" fill="#85857c"/><rect x="27.25" y="8.70" width="1.3" height="15.40" fill="url(#ng1)"/><path d="M30.40 3.10 L34.80 3.10 L33.20 4.60 L32.00 4.60 Z" fill="#85857c"/><rect x="31.95" y="3.40" width="1.3" height="15.30" fill="url(#ng1)"/><path d="M34.10 7.30 L38.50 7.30 L36.90 8.80 L35.70 8.80 Z" fill="#85857c"/><rect x="35.65" y="7.60" width="1.3" height="15.40" fill="url(#ng1)"/><path d="M38.50 5.10 L42.90 5.10 L41.30 6.60 L40.10 6.60 Z" fill="#85857c"/><rect x="40.05" y="5.40" width="1.3" height="15.50" fill="url(#ng1)"/><path d="M50.20 5.80 H54.40" stroke="#85857c" stroke-width="1.2"/><rect x="49.60" y="5.20" width="1.2" height="15.30" fill="url(#ng1)"/><rect x="53.80" y="5.20" width="1.2" height="15.30" fill="url(#ng1)"/><path d="M58.00 8.60 H63.20" stroke="#85857c" stroke-width="1.2"/><rect x="57.40" y="8.00" width="1.2" height="14.30" fill="url(#ng1)"/><rect x="62.60" y="8.00" width="1.2" height="14.30" fill="url(#ng1)"/></svg>
<div style="left:12.7px;top:366.38px;font-family:'Liberation Sans', sans-serif;font-size:9px;line-height:9px;color:#262626;white-space:nowrap;transform:scaleX(0.9);transform-origin:0 0;letter-spacing:0.4px;-webkit-text-stroke:0.12px #262626;">Stösse hor.</div>
<div style="left:12.7px;top:381.28px;font-family:'Liberation Sans', sans-serif;font-size:9px;line-height:9px;color:#262626;white-space:nowrap;transform:scaleX(0.9);transform-origin:0 0;letter-spacing:0.4px;-webkit-text-stroke:0.12px #262626;">Stösse vert.</div>
<div style="left:67px;top:363px;width:17px;height:14px;background:#fff;border:1px solid #a9a9a9;box-sizing:border-box;box-shadow:inset 1px 1px 0 #e4e4e4;"></div>
<div style="left:67px;top:378px;width:17px;height:14px;background:#fff;border:1px solid #a9a9a9;box-sizing:border-box;box-shadow:inset 1px 1px 0 #e4e4e4;"></div>
<svg style="left:71.2px;top:364.90px" width="8" height="10"><ellipse cx="4" cy="5" rx="1.9" ry="2.6" fill="none" stroke="#1e1e1e" stroke-width="1.1"/><path d="M2.6 6.8 L5.4 3.2" stroke="#1e1e1e" stroke-width="1"/></svg>
<svg style="left:71.2px;top:379.80px" width="8" height="10"><ellipse cx="4" cy="5" rx="1.9" ry="2.6" fill="none" stroke="#1e1e1e" stroke-width="1.1"/><path d="M2.6 6.8 L5.4 3.2" stroke="#1e1e1e" stroke-width="1"/></svg>
<div style="left:109.3px;top:365.18px;font-family:'Liberation Sans', sans-serif;font-size:9px;line-height:9px;color:#c6c2c0;white-space:nowrap;transform:scaleX(0.9);transform-origin:0 0;letter-spacing:0.4px;">Stösse hor.</div>
<div style="left:109.3px;top:380.08px;font-family:'Liberation Sans', sans-serif;font-size:9px;line-height:9px;color:#c6c2c0;white-space:nowrap;transform:scaleX(0.9);transform-origin:0 0;letter-spacing:0.4px;">Stösse vert.</div>
<div style="left:164px;top:361.8px;width:17px;height:14px;background:transparent;border:1px solid #cfcbc8;box-sizing:border-box;"></div>
<div style="left:164px;top:376.8px;width:17px;height:14px;background:transparent;border:1px solid #cfcbc8;box-sizing:border-box;"></div>
<svg style="left:168.2px;top:363.70px" width="8" height="10"><ellipse cx="4" cy="5" rx="1.9" ry="2.6" fill="none" stroke="#c6c2c0" stroke-width="1.1"/><path d="M2.6 6.8 L5.4 3.2" stroke="#c6c2c0" stroke-width="1"/></svg>
<svg style="left:168.2px;top:378.60px" width="8" height="10"><ellipse cx="4" cy="5" rx="1.9" ry="2.6" fill="none" stroke="#c6c2c0" stroke-width="1.1"/><path d="M2.6 6.8 L5.4 3.2" stroke="#c6c2c0" stroke-width="1"/></svg>
<div style="left:210px;top:145px;width:441px;height:317px;background:#cfc8b0;"></div>
<div style="left:211px;top:146px;width:439px;height:315px;background:#f3d35a;"></div>
<div style="left:219px;top:154px;width:82px;height:299px;background:#cfc8b0;"></div>
<div style="left:309px;top:154px;width:82px;height:299px;background:#cfc8b0;"></div>
<div style="left:398px;top:154px;width:83px;height:299px;background:#cfc8b0;"></div>
<div style="left:488px;top:154px;width:82px;height:299px;background:#cfc8b0;"></div>
<div style="left:578px;top:154px;width:64px;height:299px;background:#cfc8b0;"></div>
<div style="left:220px;top:155px;width:80px;height:297px;background:#e0b235;"></div>
<div style="left:310px;top:155px;width:80px;height:297px;background:#e0b235;"></div>
<div style="left:399px;top:155px;width:81px;height:297px;background:#e0b235;"></div>
<div style="left:489px;top:155px;width:80px;height:297px;background:#e0b235;"></div>
<div style="left:579px;top:155px;width:62px;height:297px;background:#e0b235;"></div>
<div style="left:211px;top:154px;width:439px;height:1px;background:#cfc8b0;"></div>
<div style="left:211px;top:452px;width:439px;height:1px;background:#cfc8b0;"></div>
<div style="left:211px;top:146px;width:439px;height:1px;background:#f9d64a;"></div>
<div style="left:211px;top:453px;width:439px;height:1px;background:#f9d64a;"></div>
<div style="left:211px;top:155px;width:8px;height:1px;background:#f9d64a;"></div>
<div style="left:301px;top:155px;width:8px;height:1px;background:#f9d64a;"></div>
<div style="left:391px;top:155px;width:7px;height:1px;background:#f9d64a;"></div>
<div style="left:481px;top:155px;width:7px;height:1px;background:#f9d64a;"></div>
<div style="left:570px;top:155px;width:8px;height:1px;background:#f9d64a;"></div>
<div style="left:642px;top:155px;width:8px;height:1px;background:#f9d64a;"></div>
<div style="left:220px;top:155px;width:80px;height:1px;background:#e6b02a;"></div>
<div style="left:310px;top:155px;width:80px;height:1px;background:#e6b02a;"></div>
<div style="left:399px;top:155px;width:81px;height:1px;background:#e6b02a;"></div>
<div style="left:489px;top:155px;width:80px;height:1px;background:#e6b02a;"></div>
<div style="left:579px;top:155px;width:62px;height:1px;background:#e6b02a;"></div>
</body></html>
